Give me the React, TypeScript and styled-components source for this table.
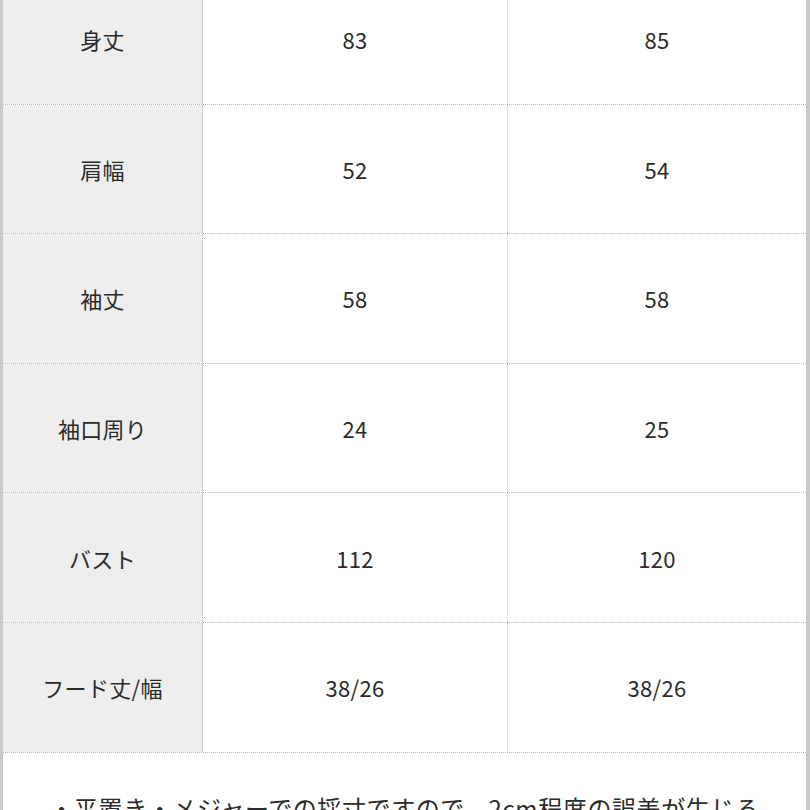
import React from 'react';
import styled, { createGlobalStyle } from 'styled-components';

const GlobalStyle = createGlobalStyle`
  html, body {
    margin: 0;
    padding: 0;
    background: #ffffff;
    overflow: hidden;
  }

  body {
    font-family: "Noto Sans CJK JP", "Noto Sans", sans-serif;
    color: #2b2b2b;
  }
`;

const Sheet = styled.div`
  width: 810px;
  height: 810px;
  box-sizing: border-box;
  border-left: 3px solid #c9c9c9;
  border-right: 4px solid #c9c9c9;
  overflow: hidden;
`;

const Table = styled.div`
  margin-top: -25px;
  display: flex;
  flex-direction: column;
`;

const Row = styled.div`
  display: grid;
  grid-template-columns: 200px 305px 1fr;
  height: 129.6px;
  box-sizing: border-box;
  border-bottom: 1px dotted #b8b8b8;
`;

const Cell = styled.div<{ $head?: boolean; $divider?: boolean }>`
  display: flex;
  align-items: center;
  justify-content: center;
  background: ${({ $head }) => ($head ? '#eeeeee' : '#ffffff')};
  border-right: ${({ $divider }) => ($divider ? '1px dotted #b8b8b8' : 'none')};
  font-size: 22px;
  letter-spacing: 0.3px;
  color: #2b2b2b;
`;

const Note = styled.p`
  margin: 0;
  padding: 37px 16px 0;
  font-size: 24px;
  line-height: 1.5;
  letter-spacing: 0.6px;
  text-align: center;
  color: #2b2b2b;
`;

type SizeRow = {
  label: string;
  m: string;
  l: string;
};

const rows: SizeRow[] = [
  { label: '身丈', m: '83', l: '85' },
  { label: '肩幅', m: '52', l: '54' },
  { label: '袖丈', m: '58', l: '58' },
  { label: '袖口周り', m: '24', l: '25' },
  { label: 'バスト', m: '112', l: '120' },
  { label: 'フード丈/幅', m: '38/26', l: '38/26' },
];

const App = () => (
  <>
    <GlobalStyle />
    <Sheet>
      <Table>
        {rows.map((row) => (
          <Row key={row.label}>
            <Cell $head $divider>
              {row.label}
            </Cell>
            <Cell $divider>{row.m}</Cell>
            <Cell>{row.l}</Cell>
          </Row>
        ))}
      </Table>
      <Note>
        ・平置き・メジャーでの採寸ですので、2cm程度の誤差が生じる
        <br />
        場合がございます。
      </Note>
    </Sheet>
  </>
);

export default App;
